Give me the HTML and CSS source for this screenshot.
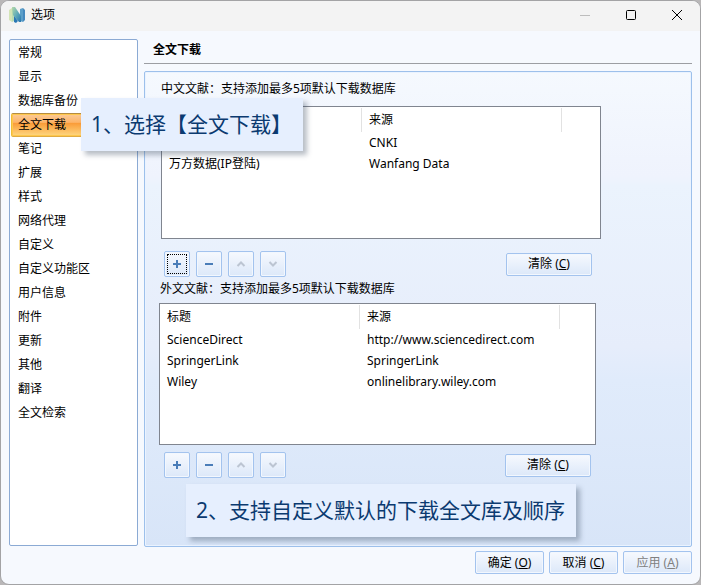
FILE: index.html
```html
<!DOCTYPE html>
<html lang="zh-CN">
<head>
<meta charset="utf-8">
<title>选项</title>
<link rel="stylesheet" href="styles.css">
</head>
<body>
<div class="window">
  <header class="titlebar">
    <svg class="logo" viewBox="0 0 16 16" aria-hidden="true">
      <defs>
        <linearGradient id="leaf" x1="0" y1="0" x2="0" y2="1"><stop offset="0" stop-color="#bcdcae"/><stop offset="1" stop-color="#b9dbb4"/></linearGradient>
        <linearGradient id="sea" x1="0" y1="0" x2="1" y2="1"><stop offset="0" stop-color="#b5d9a8"/><stop offset="0.500" stop-color="#62acb8"/><stop offset="1" stop-color="#2674b0"/></linearGradient>
      </defs>
      <path d="M0 3 3 1v14L0 13z" fill="#d3e4b6"/>
      <path d="M3 1h2v13l-2 1z" fill="url(#leaf)"/>
      <path d="M11 2l3-1v14l-3-1z" fill="#5c9fc9"/>
      <path d="M14 1l2 2v10l-2 2z" fill="#4689be"/>
      <path d="M3 0h3l6 9v6h-2L4 8z" fill="url(#sea)"/>
      <path d="M5 15V9l4 5-2 2z" fill="#2b78b4"/>
    </svg>
    <h1 class="title">选项</h1>
    <div class="caption-buttons">
      <button class="caption" type="button" aria-label="最小化" disabled><svg viewBox="0 0 12 12"><path d="M1 6.500h10" stroke="#bdbdbd"/></svg></button>
      <button class="caption" type="button" aria-label="最大化"><svg viewBox="0 0 12 12"><rect x="1.500" y="1.500" width="9" height="9" rx="1" stroke="#000"/></svg></button>
      <button class="caption" type="button" aria-label="关闭"><svg viewBox="0 0 12 12"><path d="M1 1l10 10M11 1 1 11" stroke="#000"/></svg></button>
    </div>
  </header>
  <main class="body">
    <nav class="nav">
      <button type="button">常规</button>
      <button type="button">显示</button>
      <button type="button">数据库备份</button>
      <button type="button" class="active">全文下载</button>
      <button type="button">笔记</button>
      <button type="button">扩展</button>
      <button type="button">样式</button>
      <button type="button">网络代理</button>
      <button type="button">自定义</button>
      <button type="button">自定义功能区</button>
      <button type="button">用户信息</button>
      <button type="button">附件</button>
      <button type="button">更新</button>
      <button type="button">其他</button>
      <button type="button">翻译</button>
      <button type="button">全文检索</button>
    </nav>
    <section class="page">
      <h2 class="heading">全文下载</h2>
      <div class="panel">
        <section class="source domestic">
          <h3>中文文献：支持添加最多5项默认下载数据库</h3>
          <div class="list">
            <table>
              <thead><tr><th></th><th>来源</th><th></th></tr></thead>
              <tbody>
                <tr><td></td><td>CNKI</td><td></td></tr>
                <tr><td>万方数据(IP登陆)</td><td>Wanfang Data</td><td></td></tr>
              </tbody>
            </table>
          </div>
          <div class="tools">
            <button class="tool focused" type="button" aria-label="添加"><svg viewBox="0 0 10 10"><path d="M1 5h8M5 1v8"/></svg></button>
            <button class="tool" type="button" aria-label="移除"><svg viewBox="0 0 10 10"><path d="M1 5h8"/></svg></button>
            <button class="tool" type="button" aria-label="上移" disabled><svg viewBox="0 0 10 10"><path d="M1.500 7 5 3.500 8.500 7"/></svg></button>
            <button class="tool" type="button" aria-label="下移" disabled><svg viewBox="0 0 10 10"><path d="M1.500 3 5 6.500 8.500 3"/></svg></button>
            <button class="btn clear" type="button">清除 (<u>C</u>)</button>
          </div>
        </section>
        <section class="source foreign">
          <h3>外文文献：支持添加最多5项默认下载数据库</h3>
          <div class="list">
            <table>
              <thead><tr><th>标题</th><th>来源</th><th></th></tr></thead>
              <tbody>
                <tr><td>ScienceDirect</td><td>http://www.sciencedirect.com</td><td></td></tr>
                <tr><td>SpringerLink</td><td>SpringerLink</td><td></td></tr>
                <tr><td>Wiley</td><td>onlinelibrary.wiley.com</td><td></td></tr>
              </tbody>
            </table>
          </div>
          <div class="tools">
            <button class="tool" type="button" aria-label="添加"><svg viewBox="0 0 10 10"><path d="M1 5h8M5 1v8"/></svg></button>
            <button class="tool" type="button" aria-label="移除"><svg viewBox="0 0 10 10"><path d="M1 5h8"/></svg></button>
            <button class="tool" type="button" aria-label="上移" disabled><svg viewBox="0 0 10 10"><path d="M1.500 7 5 3.500 8.500 7"/></svg></button>
            <button class="tool" type="button" aria-label="下移" disabled><svg viewBox="0 0 10 10"><path d="M1.500 3 5 6.500 8.500 3"/></svg></button>
            <button class="btn clear" type="button">清除 (<u>C</u>)</button>
          </div>
        </section>
      </div>
    </section>
  </main>
  <footer class="footer">
    <button class="btn" type="button">确定 (<u>O</u>)</button>
    <button class="btn" type="button">取消 (<u>C</u>)</button>
    <button class="btn" type="button" disabled>应用 (<u>A</u>)</button>
  </footer>
  <div class="callout first">1、选择【全文下载】</div>
  <div class="callout second">2、支持自定义默认的下载全文库及顺序</div>
</div>
</body>
</html>
```
FILE: styles.css
```css
* {
  box-sizing: border-box;
}

body {
  margin: 0;
  background: #b9b7b8;
  color: #000;
  font: 12px/18px "Noto Sans", "Noto Sans CJK SC", sans-serif;
}

button {
  padding: 0;
  font: inherit;
  color: inherit;
}

h1, h2, h3 {
  margin: 0;
  font-size: inherit;
  font-weight: normal;
}

.window {
  position: relative;
  display: flex;
  flex-direction: column;
  min-height: 100vh;
  border: 1px solid #a3a3a5;
  border-radius: 9px;
  background: #f6f9fe;
  overflow: hidden;
}

.titlebar {
  display: flex;
  align-items: center;
  height: 30px;
  padding: 0 0 2px 8px;
  background: #f3f3f3;
}

.logo {
  width: 16px;
  height: 16px;
  margin-right: 6px;
}

.caption-buttons {
  display: flex;
  margin-left: auto;
}

.caption {
  display: grid;
  place-items: center;
  width: 46px;
  height: 28px;
  border: 0;
  background: none;
}

.caption svg {
  width: 12px;
  height: 12px;
  fill: none;
}

.body {
  flex: 1;
  display: flex;
  gap: 6px;
  padding: 8px 8px 4px;
}

.nav {
  flex: 0 0 129px;
  display: flex;
  flex-direction: column;
  padding: 1px;
  margin-bottom: 1px;
  border: 1px solid #8baad4;
  border-radius: 2px;
  background: #fff;
}

.nav button {
  height: 24px;
  padding-left: 6px;
  border: 1px solid transparent;
  background: none;
  text-align: left;
}

.nav .active {
  border-color: #b58c42 #f0bd38 #e0ab42;
  border-radius: 2px;
  background: linear-gradient(#fbcb98, #fdb468 38%, #fa9c38 42%, #fed882);
  box-shadow: inset 0 0 0 1px #ffc84c;
}

.page {
  flex: 1;
  display: flex;
  flex-direction: column;
}

.heading {
  padding: 2px 9px 4px;
  border-bottom: 1px solid #9c9ea3;
  font-weight: bold;
}

.panel {
  flex: 1;
  margin-top: 7px;
  padding: 8px 14px;
  border: 1px solid #9dc0eb;
  border-radius: 2px;
  background: linear-gradient(#f5f9fe, #eff3fd 22%, #ebf3fd 24%, #e6edfb 58%, #e0ebfb 65%, #d8e5f8);
  box-shadow: inset 0 0 0 1px #eaf3ff;
}

.domestic {
  width: 440px;
  margin-left: 2px;
}

.foreign {
  width: 437px;
}

.foreign h3 {
  padding-left: 1px;
}

.list {
  border: 1px solid #80858f;
  background: #fff;
}

.domestic .list {
  height: 133px;
  margin-top: 8px;
}

.foreign .list {
  height: 142px;
  margin-top: 5px;
}

table {
  width: 100%;
  table-layout: fixed;
  border-collapse: separate;
  border-spacing: 0;
}

th, td {
  height: 21px;
  padding: 0 0 0 7px;
  line-height: 18px;
  text-align: left;
  font-weight: normal;
}

th {
  height: 25px;
  width: 200px;
  background: linear-gradient(#e2e2e2, #e2e2e2) right bottom / 1px 24px no-repeat;
}

th:last-child {
  width: auto;
  background: none;
}

.tools {
  display: flex;
  align-items: center;
  gap: 6px;
}

.domestic .tools {
  padding: 12px 9px 3px 3px;
}

.foreign .tools {
  padding: 7px 5px 0;
}

.tool {
  display: grid;
  place-items: center;
  width: 26px;
  height: 26px;
}

.tool, .btn {
  border: 1px solid #a3c3ee;
  border-radius: 2px;
  background: linear-gradient(#f6f9fe, #dce8f9);
  box-shadow: inset 0 0 0 1px #f2f7fe;
}

.focused {
  outline: 1px dotted #000;
  outline-offset: -4px;
}

.tool svg {
  width: 10px;
  height: 10px;
  fill: none;
  stroke: #4a7db8;
  stroke-width: 2;
}

.tool:disabled svg {
  stroke: #bcc5d2;
}

.btn {
  width: 69px;
  height: 23px;
}

.btn:disabled {
  color: #808080;
}

.clear {
  width: 86px;
  margin-left: auto;
}

.footer {
  display: flex;
  justify-content: flex-end;
  gap: 5px;
  padding: 0 8px 10px;
}

.callout {
  position: absolute;
  height: 53px;
  padding: 0 10px;
  background: #e6effe;
  box-shadow: 4px 4px 5px rgba(50, 65, 90, 0.35);
  color: #0b3a70;
  font-size: 21px;
  line-height: 52px;
  white-space: nowrap;
}

.first {
  left: 80px;
  top: 97px;
  width: 222px;
}

.second {
  left: 185px;
  top: 483px;
  width: 390px;
}
```
